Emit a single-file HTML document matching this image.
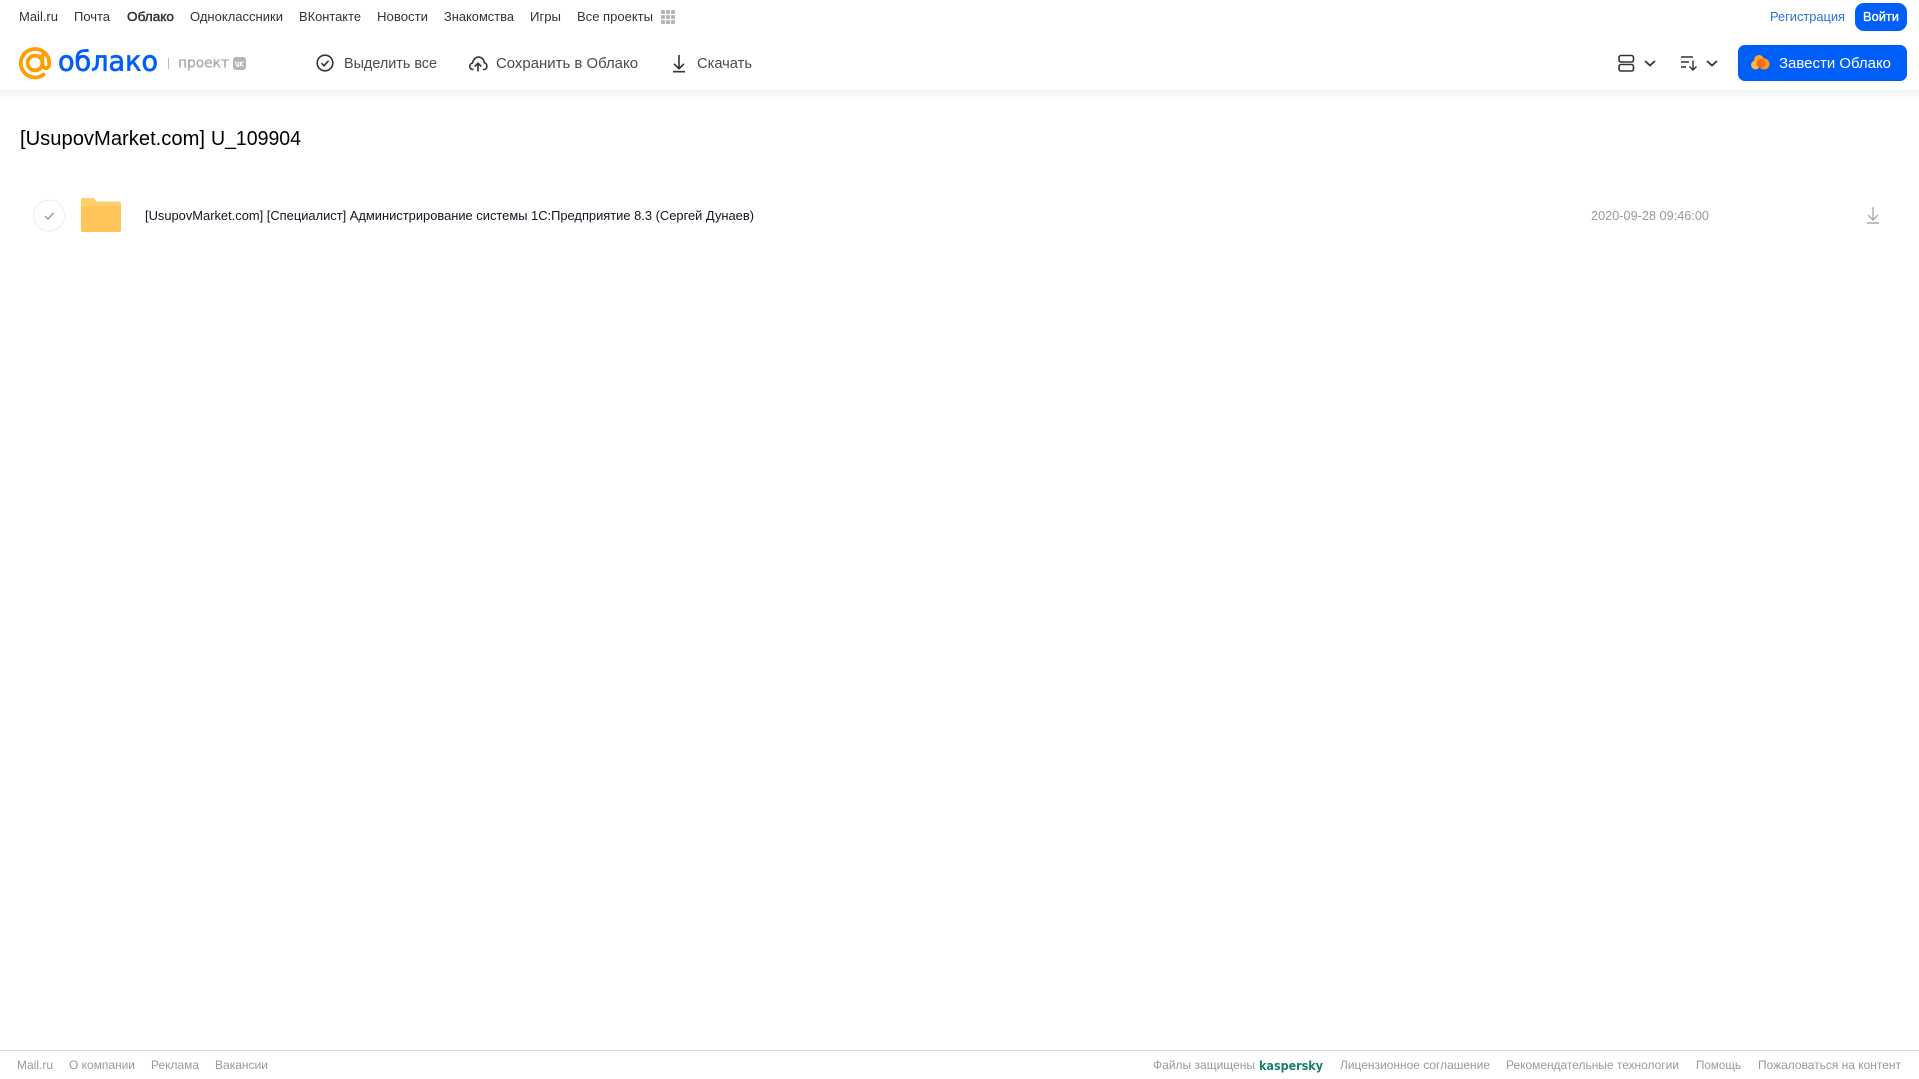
<!DOCTYPE html>
<html lang="ru"><head><meta charset="utf-8"><title>Облако</title>
<style>
html,body{margin:0;padding:0;width:1919px;height:1079px;overflow:hidden;background:#fff}
svg{display:block;position:absolute;left:0;top:0}
text{font-family:"Liberation Sans","Noto Sans CJK SC",sans-serif}
.n{font-size:13px;fill:#333}
.t{font-size:14.5px;fill:#4a4a4a}
.f{font-size:12px;fill:#999}
</style></head><body>
<svg width="1919" height="1079" viewBox="0 0 1919 1079" xmlns="http://www.w3.org/2000/svg">
<defs><linearGradient id="s" x1="0" y1="0" x2="0" y2="1"><stop offset="0" stop-color="#f2f2f2"/><stop offset="1" stop-color="#fff"/></linearGradient></defs>
<rect x="0" y="90" width="1919" height="9" fill="url(#s)"/>
<text class="n" x="19" y="21" textLength="39" lengthAdjust="spacingAndGlyphs">Mail.ru</text>
<text class="n" x="74" y="21" textLength="36" lengthAdjust="spacingAndGlyphs">Почта</text>
<text class="n" x="127" y="21" textLength="47" lengthAdjust="spacingAndGlyphs" stroke="#333" stroke-width="0.45">Облако</text>
<text class="n" x="190" y="21" textLength="93" lengthAdjust="spacingAndGlyphs">Одноклассники</text>
<text class="n" x="299" y="21" textLength="62" lengthAdjust="spacingAndGlyphs">ВКонтакте</text>
<text class="n" x="377" y="21" textLength="51" lengthAdjust="spacingAndGlyphs">Новости</text>
<text class="n" x="444" y="21" textLength="70" lengthAdjust="spacingAndGlyphs">Знакомства</text>
<text class="n" x="530" y="21" textLength="31" lengthAdjust="spacingAndGlyphs">Игры</text>
<text class="n" x="577" y="21" textLength="76" lengthAdjust="spacingAndGlyphs">Все проекты</text>
<g fill="#b5b5b5"><rect x="661" y="10" width="4" height="4" rx="1"/><rect x="666" y="10" width="4" height="4" rx="1"/><rect x="671" y="10" width="4" height="4" rx="1"/><rect x="661" y="15" width="4" height="4" rx="1"/><rect x="666" y="15" width="4" height="4" rx="1"/><rect x="671" y="15" width="4" height="4" rx="1"/><rect x="661" y="20" width="4" height="4" rx="1"/><rect x="666" y="20" width="4" height="4" rx="1"/><rect x="671" y="20" width="4" height="4" rx="1"/></g>
<text class="n" x="1770" y="21" textLength="75" lengthAdjust="spacingAndGlyphs" style="fill:#2a70e0">Регистрация</text>
<rect x="1855" y="3" width="52" height="28" rx="9" fill="#005ff9"/>
<text x="1863" y="21" font-size="13" fill="#fff" stroke="#fff" stroke-width="0.35" textLength="36" lengthAdjust="spacingAndGlyphs">Войти</text>
<!-- logo -->
<circle cx="35" cy="63" r="7.4" fill="none" stroke="#ff9e00" stroke-width="3.8"/>
<path d="M43.5 74.600A14.200 14.200 0 1 1 49.200 63V64C49.200 69.600 42.400 69.600 42.400 64V55.500" fill="none" stroke="#ff9e00" stroke-width="3.8" stroke-linecap="round"/>
<text x="58" y="70.500" style="font-family:'DejaVu Sans',sans-serif" font-size="27.500" fill="#005ff9" stroke="#005ff9" stroke-width="0.7" textLength="100" lengthAdjust="spacingAndGlyphs">облако</text>
<rect x="168" y="58" width="1" height="11" fill="#bbb"/>
<text x="178" y="67.500" style="font-family:'DejaVu Sans',sans-serif" font-size="14" fill="#aaa" stroke="#aaa" stroke-width="0.3" textLength="51" lengthAdjust="spacingAndGlyphs">проект</text>
<rect x="233" y="57" width="13" height="13" rx="3" fill="#b5b5b5"/>
<path d="M235.300 61.500L237.300 66.500L238.300 66.500V61.500M243.700 61.500L240.500 64L243.700 66.500M240.300 61.500V66.500" fill="none" stroke="#fff" stroke-width="1.100"/>
<!-- toolbar -->
<circle cx="325" cy="63" r="7.800" fill="none" stroke="#333" stroke-width="1.600"/>
<path d="M321.500 63.200L324 65.700L328.600 60.800" fill="none" stroke="#333" stroke-width="1.600"/>
<text class="t" x="344" y="68" textLength="93" lengthAdjust="spacingAndGlyphs">Выделить все</text>
<path d="M473.500 69.500H473C469 69.500 468.500 64 472.500 63C473.300 59 476 57 478.500 57C481.800 57 484 59.500 484.300 62.800C487.800 63.300 487.800 69.500 484 69.500H483" fill="none" stroke="#333" stroke-width="1.600" stroke-linejoin="round"/>
<path d="M478 71.500V63.500M474.700 66.500L478 63.200L481.300 66.500" fill="none" stroke="#333" stroke-width="1.600"/>
<text class="t" x="496" y="68" textLength="142" lengthAdjust="spacingAndGlyphs">Сохранить в Облако</text>
<path d="M679 55V68.500M674 63.800L679 68.700L684 63.800M673 71.700H685" fill="none" stroke="#333" stroke-width="1.600"/>
<text class="t" x="697" y="68" textLength="55" lengthAdjust="spacingAndGlyphs">Скачать</text>
<!-- view/sort -->
<rect x="1619" y="55.500" width="14.500" height="6.500" rx="2" fill="none" stroke="#333" stroke-width="1.600"/>
<rect x="1619" y="64.500" width="14.500" height="6.500" rx="2" fill="none" stroke="#333" stroke-width="1.600"/>
<path d="M1645 61L1650 65.500L1655 61" fill="none" stroke="#333" stroke-width="1.800"/>
<path d="M1681 57H1693M1681 62H1689M1681 67H1686" fill="none" stroke="#333" stroke-width="1.400"/>
<path d="M1693 60.500V69.500M1689.500 66.500L1693 70L1696.500 66.500" fill="none" stroke="#333" stroke-width="1.400"/>
<path d="M1707 61L1712 65.500L1717 61" fill="none" stroke="#333" stroke-width="1.800"/>
<rect x="1738" y="45" width="169" height="36" rx="7" fill="#005ff9"/>
<circle cx="1759" cy="60" r="5" fill="#ffa620"/><circle cx="1755.500" cy="65" r="4.500" fill="#ffb53f"/><circle cx="1764" cy="64" r="5.500" fill="#ff9e00"/><circle cx="1761" cy="63.500" r="4.500" fill="#f46a1b"/>
<text x="1779" y="68" font-size="14.500" fill="#fff" textLength="112" lengthAdjust="spacingAndGlyphs">Завести Облако</text>
<!-- content -->
<text x="20" y="145" font-size="20" fill="#000" textLength="185" lengthAdjust="spacingAndGlyphs">[UsupovMarket.com]</text>
<text x="211" y="145" font-size="20" fill="#000" textLength="90" lengthAdjust="spacingAndGlyphs">U_109904</text>
<circle cx="49" cy="215.500" r="15.500" fill="#fff" stroke="#eee"/>
<path d="M45 216L48 219L53.500 213" fill="none" stroke="#999" stroke-width="1.400"/>
<path d="M81 200.500C81 199 82 198 83.500 198H92.500C94 198 95 199 96 201.500H119C120.200 201.500 121 202.300 121 203.500V230C121 231.200 120.200 232 119 232H83C81.800 232 81 231.200 81 230Z" fill="#ffcf6b"/>
<path d="M81 206.500H121V230C121 231.200 120.200 232 119 232H83C81.800 232 81 231.200 81 230Z" fill="#ffc558"/>
<text x="145" y="220" font-size="12.500" fill="#1a1020" textLength="609" lengthAdjust="spacingAndGlyphs">[UsupovMarket.com] [Специалист] Администрирование системы 1С:Предприятие 8.3 (Сергей Дунаев)</text>
<text x="1591" y="220" font-size="12.500" fill="#999" textLength="118" lengthAdjust="spacingAndGlyphs">2020-09-28 09:46:00</text>
<path d="M1873 207V220M1868 215L1873 220L1878 215M1867 223H1879" fill="none" stroke="#aaa" stroke-width="1.400"/>
<!-- footer -->
<rect x="0" y="1050" width="1919" height="1" fill="#d9d9d9"/>
<text class="f" x="17" y="1069" textLength="36" lengthAdjust="spacingAndGlyphs">Mail.ru</text>
<text class="f" x="69" y="1069" textLength="66" lengthAdjust="spacingAndGlyphs">О компании</text>
<text class="f" x="151" y="1069" textLength="48" lengthAdjust="spacingAndGlyphs">Реклама</text>
<text class="f" x="215" y="1069" textLength="53" lengthAdjust="spacingAndGlyphs">Вакансии</text>
<text class="f" x="1153" y="1069" textLength="102" lengthAdjust="spacingAndGlyphs">Файлы защищены</text>
<text x="1259" y="1070" style="font-family:'DejaVu Sans',sans-serif" font-size="12.500" font-weight="700" fill="#17806d" textLength="64" lengthAdjust="spacingAndGlyphs">kaspersky</text>
<text class="f" x="1340" y="1069" textLength="150" lengthAdjust="spacingAndGlyphs">Лицензионное соглашение</text>
<text class="f" x="1506" y="1069" textLength="173" lengthAdjust="spacingAndGlyphs">Рекомендательные технологии</text>
<text class="f" x="1696" y="1069" textLength="45" lengthAdjust="spacingAndGlyphs">Помощь</text>
<text class="f" x="1758" y="1069" textLength="143" lengthAdjust="spacingAndGlyphs">Пожаловаться на контент</text>
</svg>
</body></html>
